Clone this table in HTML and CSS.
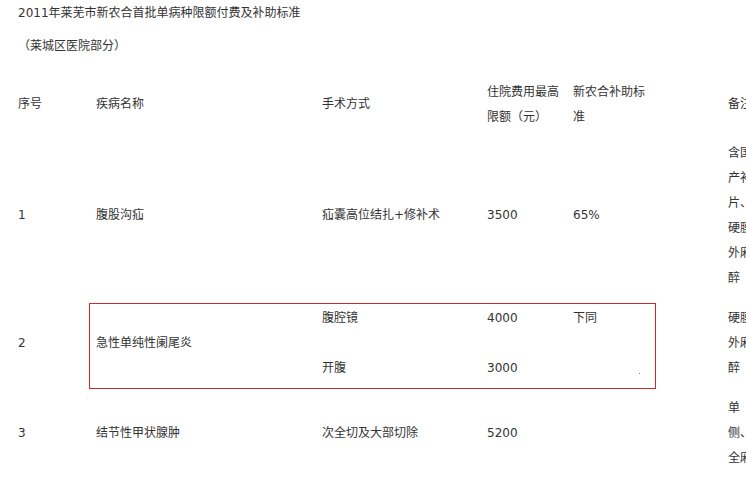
FILE: index.html
```html
<!DOCTYPE html>
<html lang="zh-CN">
<head>
<meta charset="utf-8">
<title>2011年莱芜市新农合首批单病种限额付费及补助标准</title>
<link rel="stylesheet" href="styles.css">
</head>
<body>
<div class="page">
  <p class="title">2011年莱芜市新农合首批单病种限额付费及补助标准</p>
  <p class="subtitle">（莱城区医院部分）</p>
  <table class="grid">
    <colgroup>
      <col class="c-no"><col class="c-name"><col class="c-op"><col class="c-fee"><col class="c-rate"><col class="c-note">
    </colgroup>
    <tr class="head">
      <td>序号</td>
      <td>疾病名称</td>
      <td>手术方式</td>
      <td class="fee">住院费用最高限额（元）</td>
      <td class="rate">新农合补助标准</td>
      <td class="note">备注</td>
    </tr>
    <tr class="row">
      <td>1</td>
      <td>腹股沟疝</td>
      <td>疝囊高位结扎+修补术</td>
      <td class="fee">3500</td>
      <td class="rate">65%</td>
      <td class="note">含国产补片、硬膜外麻醉</td>
    </tr>
    <tr class="row sub-top">
      <td rowspan="2">2</td>
      <td rowspan="2">急性单纯性阑尾炎</td>
      <td>腹腔镜</td>
      <td class="fee">4000</td>
      <td class="rate">下同</td>
      <td class="note" rowspan="2">硬膜外麻醉</td>
    </tr>
    <tr class="row sub-bottom">
      <td>开腹</td>
      <td class="fee">3000</td>
      <td class="rate"></td>
    </tr>
    <tr class="row">
      <td>3</td>
      <td>结节性甲状腺肿</td>
      <td>次全切及大部切除</td>
      <td class="fee">5200</td>
      <td class="rate"></td>
      <td class="note">单侧、全麻</td>
    </tr>
  </table>
  <div class="mark"><span class="speck"></span></div>
</div>
</body>
</html>
```

FILE: styles.css
```css
html, body {
  margin: 0;
  padding: 0;
  background: #ffffff;
  overflow: hidden;
}

body {
  width: 746px;
  height: 482px;
  font-family: "DejaVu Sans", "Noto Sans CJK SC", sans-serif;
  font-size: 12px;
  color: #333333;
}

.page {
  position: relative;
  padding-left: 18px;
}

.title {
  margin: 0;
  line-height: 26px;
  white-space: nowrap;
}

.subtitle {
  margin: 7px 0 0 0;
  line-height: 26px;
}

.grid {
  margin-top: 12px;
  border-collapse: collapse;
  border-spacing: 0;
  table-layout: fixed;
  width: 740px;
}

.c-no { width: 78px; }
.c-name { width: 226px; }
.c-op { width: 165px; }
.c-fee { width: 86px; }
.c-rate { width: 155px; }
.c-note { width: 30px; }

.grid td {
  padding: 0;
  line-height: 25px;
  vertical-align: middle;
  text-align: left;
}

.grid td.fee { padding-right: 8px; }
.grid td.rate { padding-right: 75px; }
.grid td.note { padding-right: 2px; }

.head td {
  padding-top: 8.5px;
  padding-bottom: 3.5px;
}

.row td {
  padding-top: 7.5px;
  padding-bottom: 7.5px;
}

.sub-top td { vertical-align: top; padding-bottom: 0; }
.sub-top td[rowspan] { vertical-align: middle; padding-bottom: 7.5px; }
.sub-bottom td { vertical-align: bottom; padding-top: 0; }

.mark {
  position: absolute;
  left: 89px;
  top: 303px;
  width: 565px;
  height: 84px;
  border: 1px solid #cc2a2a;
}

.speck {
  position: absolute;
  left: 549px;
  top: 69px;
  width: 1px;
  height: 1px;
  background: #777777;
}
```
